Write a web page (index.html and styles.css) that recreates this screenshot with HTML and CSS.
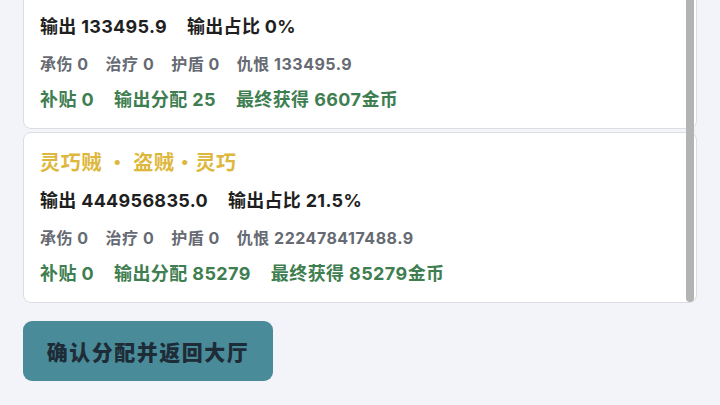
FILE: index.html
```html
<!DOCTYPE html>
<html lang="zh">
<head>
<meta charset="utf-8">
<link rel="stylesheet" href="styles.css">
</head>
<body>
<div class="page">
  <div class="list">
    <div class="list-inner">
      <div class="card">
        <div class="title">狂战士 · 战士·狂暴</div>
        <div class="row main"><span>输出 133495.9</span><span>输出占比 0%</span></div>
        <div class="row sub"><span>承伤 0</span><span>治疗 0</span><span>护盾 0</span><span>仇恨 133495.9</span></div>
        <div class="row gain"><span>补贴 0</span><span>输出分配 25</span><span>最终获得 6607金币</span></div>
      </div>
      <div class="card">
        <div class="title">灵巧贼 · 盗贼·灵巧</div>
        <div class="row main"><span>输出 444956835.0</span><span>输出占比 21.5%</span></div>
        <div class="row sub"><span>承伤 0</span><span>治疗 0</span><span>护盾 0</span><span>仇恨 222478417488.9</span></div>
        <div class="row gain"><span>补贴 0</span><span>输出分配 85279</span><span>最终获得 85279金币</span></div>
      </div>
    </div>
    <div class="thumb"></div>
  </div>
  <button class="confirm">确认分配并返回大厅</button>
</div>
</body>
</html>
```

FILE: styles.css
```css
html, body {
  margin: 0;
  padding: 0;
  background: #f3f4f9;
  font-family: "Inter", "Noto Sans CJK SC", sans-serif;
}
.page {
  width: 720px;
  height: 405px;
  overflow: hidden;
  padding-left: 23px;
  box-sizing: border-box;
}
.list {
  position: relative;
  width: 674px;
  height: 305px;
  overflow: hidden;
}
.list-inner {
  display: flex;
  flex-direction: column;
  gap: 3px;
  margin-top: -42px;
}
.card {
  background: #fff;
  border: 1px solid #dcdde2;
  border-radius: 8px;
  padding: 15px 16px 15px;
  display: flex;
  flex-direction: column;
  gap: 11px;
}
.title {
  color: #deb73d;
  font-family: "Noto Sans CJK SC", sans-serif;
  font-size: 20px;
  font-weight: 700;
  line-height: 28px;
  letter-spacing: 0.7px;
  white-space: pre;
}
.row {
  display: flex;
  gap: 20px;
  font-weight: 700;
}
.main {
  color: #1f1f22;
  font-size: 18px;
  line-height: 28px;
  letter-spacing: 0.3px;
}
.sub {
  color: #666a72;
  font-size: 16px;
  line-height: 24px;
  letter-spacing: 0.5px;
  gap: 17px;
}
.gain {
  color: #3e7e50;
  font-size: 18px;
  line-height: 26px;
  letter-spacing: 0.4px;
}
.thumb {
  position: absolute;
  right: 3px;
  top: 0;
  width: 8px;
  height: 302px;
  background: #b3b3b3;
  border-radius: 0 0 4px 4px;
}
.confirm {
  margin-top: 16px;
  width: 250px;
  height: 60px;
  border: none;
  border-radius: 9px;
  background: #4a8b99;
  color: #1e2c38;
  font-family: "Noto Sans CJK SC", sans-serif;
  font-size: 21px;
  font-weight: 900;
  letter-spacing: 1.5px;
  padding: 0;
}
```
